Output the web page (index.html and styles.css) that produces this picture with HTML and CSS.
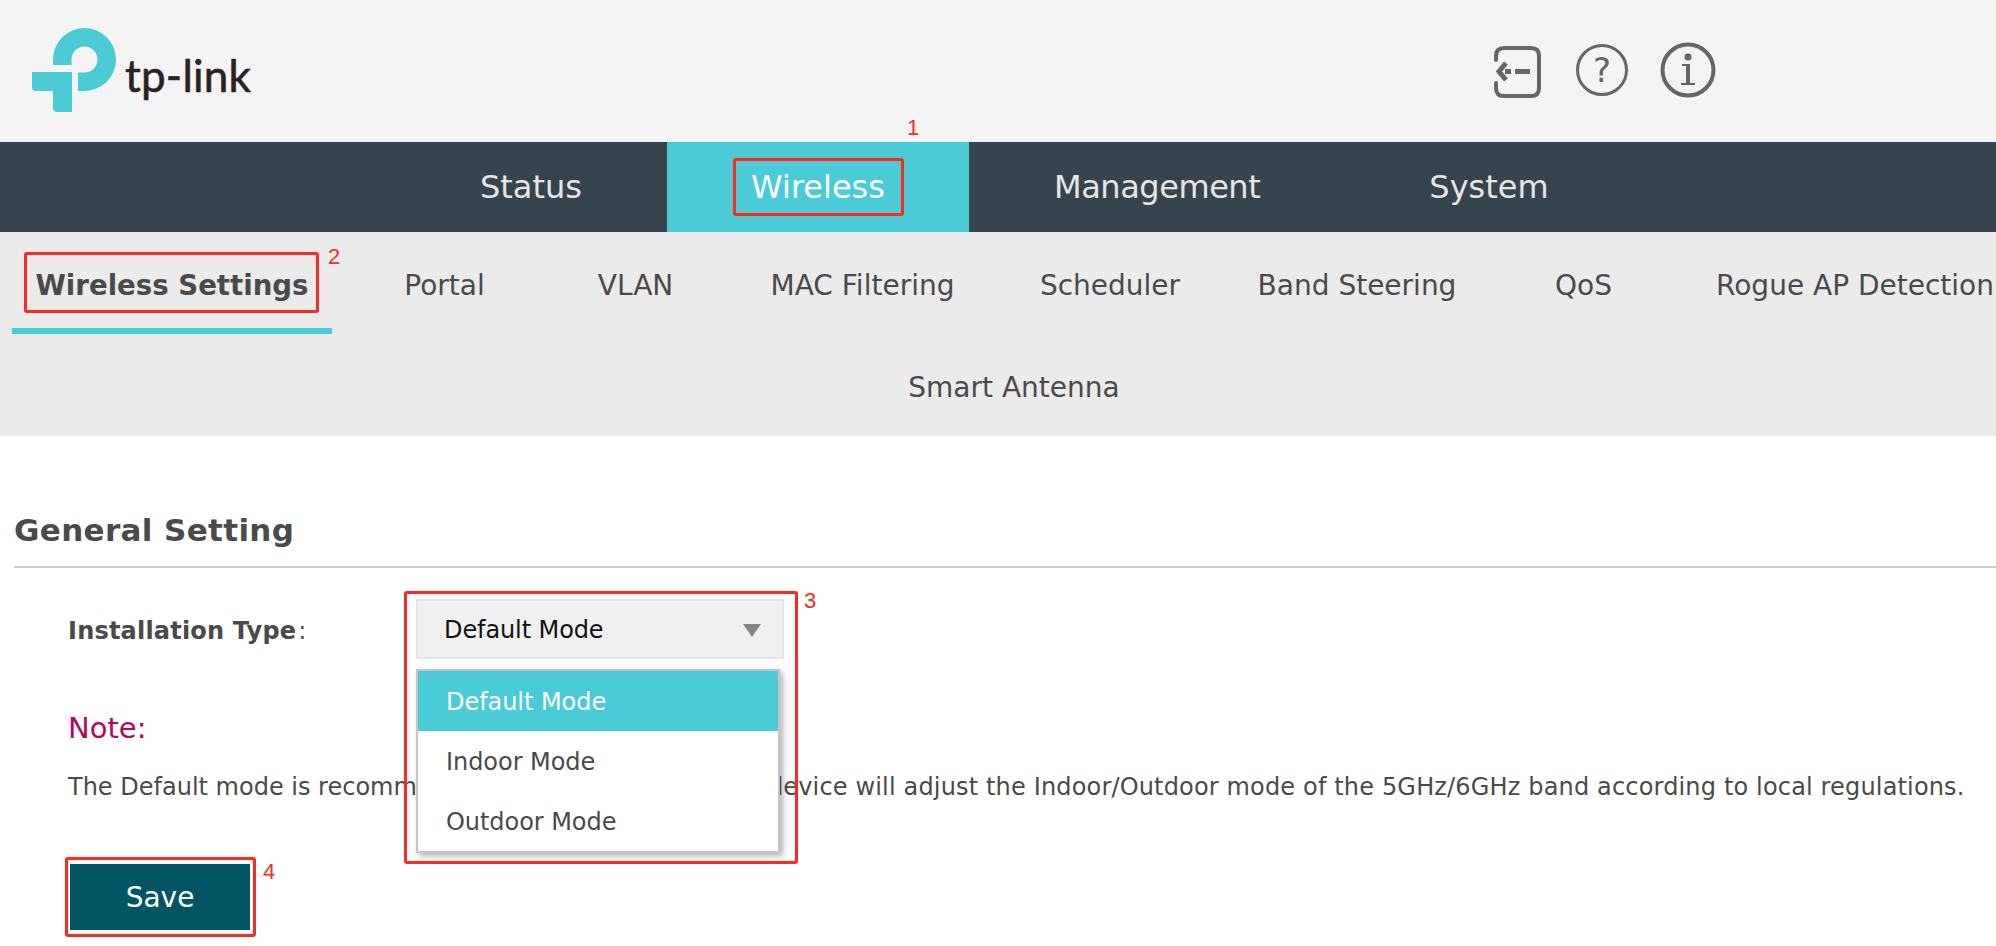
FILE: index.html
```html
<!DOCTYPE html>
<html lang="en">
<head>
<meta charset="utf-8">
<title>Wireless Settings</title>
<link rel="stylesheet" href="styles.css">
</head>
<body>
<div class="page">
  <header class="top">
    <div class="logo">
      <svg class="logo-mark" viewBox="0 0 84 84" width="84" height="84">
        <path d="M0 44H40V84H25q-4 0-4-4V63H4q-4 0-4-4z" fill="#4acbd6"/>
        <path d="M21 37V31.5A31.5 31.5 0 1 1 52.5 63H46V44.5H52.5A13 13 0 1 0 39.5 31.5V37z" fill="#4acbd6"/>
      </svg>
      <span class="logo-text">tp-link</span>
    </div>
    <div class="tools">
      <svg class="tool tool-logout" viewBox="0 0 48 52" width="48" height="52">
        <path d="M3 14V10q0-8 8-8h27q8 0 8 8v32q0 8-8 8H11q-8 0-8-8v-5" fill="none" stroke="#666" stroke-width="4" stroke-linecap="round"/>
        <path d="M13 17L6 25.5L13 34" fill="none" stroke="#666" stroke-width="5"/>
        <rect x="12" y="23" width="6" height="5" fill="#666"/>
        <rect x="22" y="23" width="15" height="5" fill="#666"/>
      </svg>
      <svg class="tool tool-help" viewBox="0 0 52 52" width="52" height="52">
        <circle cx="26" cy="26" r="24.5" fill="none" stroke="#666" stroke-width="3"/>
        <text x="26" y="38" class="help-mark">?</text>
      </svg>
      <svg class="tool tool-info" viewBox="0 0 56 56" width="56" height="56">
        <circle cx="28" cy="28" r="25.5" fill="none" stroke="#666" stroke-width="4"/>
        <circle cx="28" cy="15" r="3.6" fill="#666"/>
        <rect x="26" y="22" width="4" height="20" fill="#666"/>
        <rect x="22" y="22" width="6" height="2" fill="#666"/>
        <rect x="21" y="41" width="14" height="2" fill="#666"/>
      </svg>
    </div>
  </header>

  <nav class="nav">
    <a class="nav-item nav-status">Status</a>
    <a class="nav-item nav-wireless active">Wireless</a>
    <a class="nav-item nav-management">Management</a>
    <a class="nav-item nav-system">System</a>
  </nav>

  <nav class="subnav">
    <div class="subnav-row">
      <a class="sub-item active">Wireless Settings</a>
      <a class="sub-item">Portal</a>
      <a class="sub-item">VLAN</a>
      <a class="sub-item">MAC Filtering</a>
      <a class="sub-item">Scheduler</a>
      <a class="sub-item">Band Steering</a>
      <a class="sub-item">QoS</a>
      <a class="sub-item">Rogue AP Detection</a>
    </div>
    <div class="subnav-row2">
      <a class="sub-item">Smart Antenna</a>
    </div>
  </nav>

  <main class="content">
    <h2 class="section-title">General Setting</h2>
    <div class="form-row">
      <label class="form-label"><b class="form-label-name">Installation Type</b>:</label>
      <div class="select">
        <span>Default Mode</span>
        <i class="caret"></i>
      </div>
    </div>
    <h3 class="note-title">Note:</h3>
    <p class="note-text">The Default mode is recomm<span class="note-covered">ended. In Default mode, the </span><span class="note-rest">device will adjust the Indoor/Outdoor mode of the 5GHz/6GHz band according to local regulations.</span></p>
    <button class="save">Save</button>
  </main>

  <ul class="dropdown">
    <li class="selected">Default Mode</li>
    <li>Indoor Mode</li>
    <li>Outdoor Mode</li>
  </ul>

  <div class="mark mark-1"></div><span class="mark-num num-1">1</span>
  <div class="mark mark-2"></div><span class="mark-num num-2">2</span>
  <div class="mark mark-3"></div><span class="mark-num num-3">3</span>
  <div class="mark mark-4"></div><span class="mark-num num-4">4</span>
</div>
</body>
</html>
```
FILE: styles.css
```css
* { box-sizing: border-box; }
html, body { margin: 0; padding: 0; background: #fff; }
.page {
  position: relative;
  width: 1996px;
  height: 946px;
  overflow: hidden;
  font-family: "DejaVu Sans", Verdana, sans-serif;
  color: #4a4a4a;
}
.top {
  height: 142px;
  background: #f4f4f4;
  display: flex;
  align-items: flex-start;
  justify-content: space-between;
  padding: 28px 280px 0 32px;
}
.logo { display: flex; align-items: flex-start; }
.logo-mark { display: block; }
.logo-text {
  font-family: "Lato", sans-serif;
  font-size: 44px;
  line-height: 56px;
  color: #2a2220;
  margin: 19px 0 0 9px;
  letter-spacing: 0.2px;
  -webkit-text-stroke: 0.6px #2a2220;
}
.tools { display: flex; align-items: center; gap: 33px; padding-top: 14px; }
.tool { display: block; }
.tool-logout { margin-right: 2px; margin-top: 3px; }
.tool-help { margin-right: -1px; }
.help-mark { font-family: "DejaVu Sans", sans-serif; font-size: 34px; font-weight: 400; fill: #666; text-anchor: middle; }

.nav {
  height: 90px;
  background: #36454d;
  display: flex;
}
.nav-item {
  display: flex;
  align-items: center;
  justify-content: center;
  font-size: 32px;
  color: #e6e6e6;
}
.nav-status { width: 667px; padding-left: 480px; justify-content: flex-start; }
.nav-wireless { width: 302px; }
.nav-item.active { background: #4acbd6; color: #fff; }
.nav-management { margin-left: 85px; letter-spacing: -0.45px; }
.nav-system { margin-left: 169px; }

.subnav { height: 204px; background: #ebebeb; }
.subnav-row {
  display: grid;
  grid-template-columns: 320px 225px 157px 297px 198px 296px 157px 386px;
  margin-left: 12px;
  height: 102px;
}
.subnav-row2 {
  display: flex;
  justify-content: center;
  height: 102px;
  padding-left: 32px;
}
.sub-item {
  display: flex;
  align-items: center;
  justify-content: center;
  font-size: 28px;
  color: #4a4a4a;
  white-space: nowrap;
  padding-top: 5px;
}
.sub-item.active {
  font-weight: 700;
  font-size: 27.6px;
  border-bottom: 6px solid #4acbd6;
  padding-top: 10px;
}

.content { padding: 69px 0 0 14px; }
.section-title {
  margin: 0;
  font-size: 31px;
  line-height: 50px;
  font-weight: 700;
  letter-spacing: 0.35px;
  color: #4a4a4a;
  padding-bottom: 11px;
  border-bottom: 2px solid #cccccc;
}
.form-row {
  display: flex;
  align-items: center;
  margin-top: 31px;
  padding-left: 54px;
}
.form-label { width: 348px; font-size: 24px; color: #4a4a4a; padding-top: 3px; }
.form-label-name { letter-spacing: 0.2px; margin-right: 2px; }
.select {
  width: 368px;
  height: 60px;
  background: #f0f0f0;
  border: 2px solid #e4e4e4;
  padding: 2px 21px 0 26px;
  display: flex;
  align-items: center;
  justify-content: space-between;
  font-size: 24px;
  letter-spacing: -0.1px;
  color: #111;
}
.caret {
  width: 0;
  height: 0;
  border-left: 9px solid transparent;
  border-right: 9px solid transparent;
  border-top: 13px solid #868686;
}
.note-title {
  margin: 47px 0 0 54px;
  font-size: 29px;
  line-height: 44px;
  font-weight: 400;
  color: #b5065f;
}
.note-text {
  margin: 19px 0 0 54px;
  font-size: 24px;
  line-height: 36px;
  color: #4a4a4a;
  white-space: nowrap;
}
.note-covered { letter-spacing: 0.18px; }
.note-rest { letter-spacing: 0.16px; }
.save {
  display: block;
  margin: 59px 0 0 56px;
  width: 180px;
  height: 66px;
  border: 0;
  background: #025664;
  color: #fff;
  font: 400 28px "DejaVu Sans", sans-serif;
}

.dropdown {
  position: absolute;
  left: 416px;
  top: 669px;
  width: 364px;
  margin: 0;
  padding: 0;
  list-style: none;
  background: #fff;
  border: 2px solid #c6c6c6;
  box-shadow: 3px 3px 6px rgba(0,0,0,.3);
  font-size: 24px;
  letter-spacing: -0.05px;
  color: #4a4a4a;
}
.dropdown li { height: 60px; line-height: 62px; padding-left: 28px; }
.dropdown li.selected { background: #4acbd6; color: #fff; }

.mark {
  position: absolute;
  border: 3px solid #fb2a20;
  border-radius: 3px;
}
.mark-1 { left: 733px; top: 158px; width: 171px; height: 58px; }
.mark-2 { left: 24px; top: 252px; width: 295px; height: 61px; }
.mark-3 { left: 404px; top: 591px; width: 394px; height: 273px; }
.mark-4 { left: 65px; top: 857px; width: 191px; height: 80px; }
.mark-num {
  position: absolute;
  color: #fb2a20;
  font-family: "Liberation Sans", sans-serif;
  font-size: 22px;
  line-height: 24px;
}
.num-1 { left: 907px; top: 116px; }
.num-2 { left: 328px; top: 245px; }
.num-3 { left: 804px; top: 589px; }
.num-4 { left: 263px; top: 860px; }
```
